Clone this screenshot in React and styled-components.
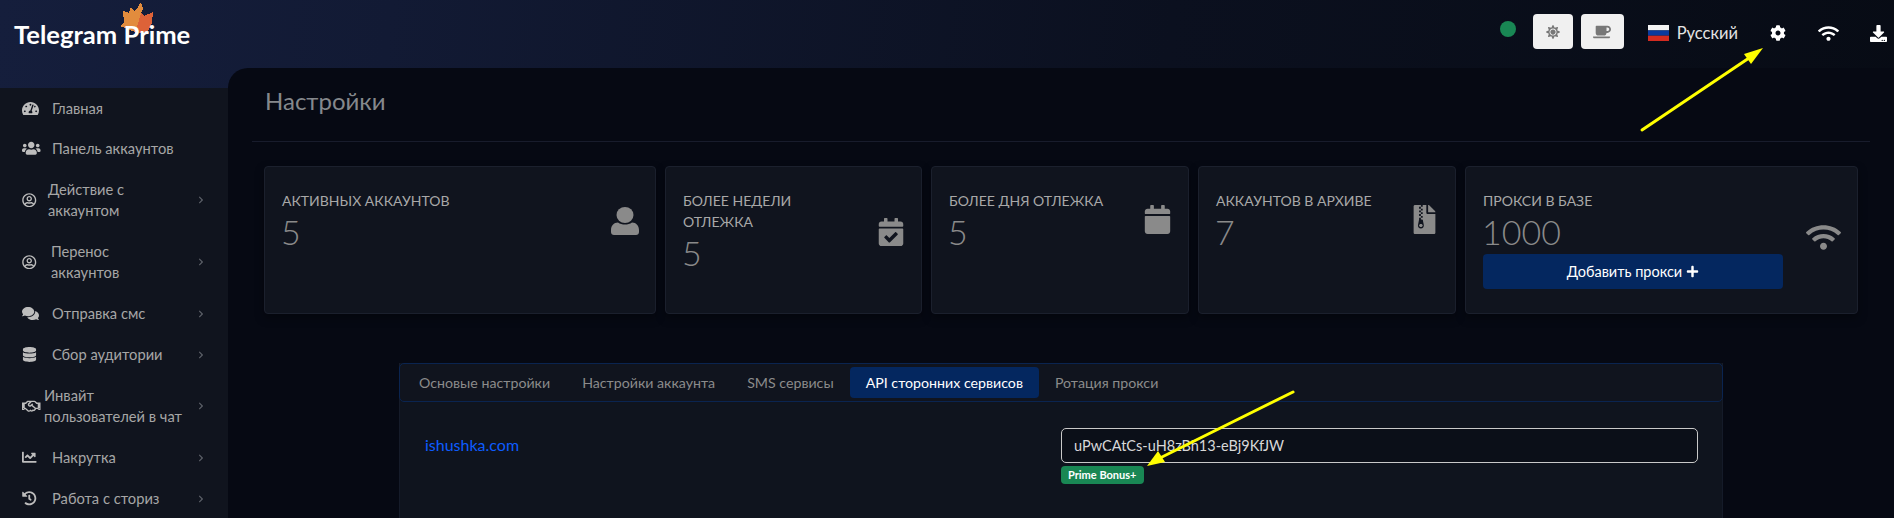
import React from "react";
import styled, { createGlobalStyle } from "styled-components";
import {
  FaTachometerAlt, FaUsers, FaRegUserCircle, FaComments, FaDatabase, FaRegHandshake,
  FaChartLine, FaHistory, FaChevronRight, FaCalendarCheck, FaCalendar,
  FaFileArchive, FaWifi, FaPlus, FaSun, FaCoffee, FaCog, FaDownload,
} from "react-icons/fa";

const Global = createGlobalStyle`
  html, body { margin: 0; padding: 0; background: #060913; }
  body { font-family: "Lato", "Noto Sans", "Open Sans", sans-serif; overflow: hidden; }
  * { box-sizing: border-box; }
`;

const Shell = styled.div`
  position: relative;
  width: 1894px;
  height: 518px;
  overflow: hidden;
  background: linear-gradient(97deg, #151e3c 0%, #121a34 20%, #0b101f 60%, #070b14 100%);
`;

const Header = styled.header`
  height: 68px;
  display: flex;
  align-items: flex-start;
`;

const Brand = styled.div`
  position: relative;
  width: 228px;
  padding: 21px 0 0 14px;
  font-size: 25.6px;
  line-height: 26px;
  font-weight: 700;
  color: #fff;
`;

const BrandText = styled.span`
  position: relative;
`;

const Leaf = styled.svg`
  position: absolute;
  left: 120px;
  top: 1px;
  width: 34px;
  height: 32px;
`;

const TopBar = styled.div`
  flex: 1;
  display: flex;
  align-items: flex-start;
  justify-content: flex-end;
  padding-top: 14px;
  margin-right: -9px;
`;

const StatusDot = styled.span`
  width: 16px;
  height: 16px;
  margin: 7px 17px 0 0;
  border-radius: 50%;
  background: #198754;
`;

const ToolButton = styled.button`
  width: ${(p) => p.$w}px;
  height: 35px;
  margin-right: 8px;
  display: flex;
  align-items: center;
  justify-content: center;
  border: 0;
  padding: 0;
  border-radius: 4px;
  background: #f0f0f0;
  color: #777;
  font-size: ${(p) => p.$size}px;
`;

const Language = styled.div`
  display: flex;
  align-items: center;
  height: 38px;
  margin: 0 15px 0 16px;
  gap: 8px;
  font-size: 16.5px;
  color: #e4e4e4;
`;

const TopIcon = styled.span`
  width: 50px;
  height: 38px;
  display: flex;
  align-items: center;
  justify-content: center;
  color: #fff;
  font-size: ${(p) => p.$size}px;
`;

const Body = styled.div`
  display: flex;
  height: 450px;
`;

const Sidebar = styled.nav`
  width: 228px;
  margin-top: 20px;
  background: #10141e;
`;

const NavItem = styled.div`
  display: flex;
  align-items: center;
  height: ${(p) => (p.$double ? 62 : 41)}px;
  padding: 0 23px 0 22px;
  color: #a6a6a6;
  font-size: 14.7px;
  line-height: 21px;
  &:first-child { height: 40px; }
`;

const NavIcon = styled.span`
  display: flex;
  flex: none;
  width: ${(p) => p.$w}px;
  font-size: ${(p) => p.$size}px;
  color: #bdbdbd;
`;

const NavCaret = styled.span`
  display: flex;
  margin-left: auto;
  font-size: 8px;
  color: #5c6068;
`;

const Main = styled.main`
  flex: 1;
  padding: 0 24px;
  border-top-left-radius: 20px;
  background: #060913;
`;

const TitleRow = styled.div`
  height: 74px;
  padding: 17px 0 0 13px;
  border-bottom: 1px solid #181c2c;
`;

const Title = styled.h1`
  margin: 0;
  font-size: 24px;
  line-height: 32px;
  font-weight: 400;
  color: #85888c;
`;

const Stats = styled.section`
  display: grid;
  grid-template-columns: 392px 257px 258px 258px 393px;
  gap: 9px;
  margin: 24px 0 0 12px;
`;

const StatCard = styled.article`
  height: 148px;
  display: flex;
  align-items: flex-start;
  padding: 23px 16px 0 17px;
  border: 1px solid #1b202d;
  border-radius: 4px;
  background: #10141e;
  box-shadow: 0 4px 10px rgba(0, 0, 0, 0.35);
`;

const StatText = styled.div`
  flex: 1;
  min-width: 0;
`;

const StatLabel = styled.div`
  font-size: 14px;
  line-height: 21px;
  color: #a8a8a8;
  text-transform: uppercase;
`;

const StatValue = styled.div`
  margin-left: -1px;
  font-size: 34px;
  line-height: 41px;
  font-weight: 300;
  color: #8a8a8a;
`;

const StatIcon = styled.span`
  display: flex;
  margin-top: ${(p) => p.$top}px;
  font-size: ${(p) => p.$size}px;
  color: #8a8a8a;
`;

const AddProxy = styled.button`
  width: 300px;
  height: 35px;
  margin-top: 2px;
  display: flex;
  align-items: center;
  justify-content: center;
  gap: 4px;
  border: 0;
  border-radius: 4px;
  background: #04275f;
  color: #fff;
  font-family: inherit;
  font-size: 14.5px;
`;

const Panel = styled.section`
  width: 1324px;
  height: 170px;
  margin: 49px 0 0 147px;
  border-left: 1px solid #151b29;
  border-right: 1px solid #151b29;
  background: #0f141e;
`;

const TabBar = styled.div`
  height: 39px;
  margin: 0 -1px;
  display: flex;
  align-items: center;
  padding: 0 3px;
  border: 1px solid #0a2450;
  border-radius: 5px;
  background: #10141e;
`;

const Tab = styled.div`
  height: 31px;
  padding: 0 16px;
  display: flex;
  align-items: center;
  border-radius: 4px;
  font-size: 14.2px;
  color: ${(p) => (p.$active ? "#fff" : "#8b8b8b")};
  background: ${(p) => (p.$active ? "#04275f" : "transparent")};
`;

const ServiceRow = styled.div`
  display: grid;
  grid-template-columns: 661px 637px;
  padding-top: 26px;
`;

const ServiceLink = styled.a`
  padding: 6px 0 0 25px;
  font-size: 16px;
  line-height: 21px;
  color: #0d5cff;
`;

const KeyInput = styled.input`
  display: block;
  width: 100%;
  height: 35px;
  padding: 0 12px;
  border: 1px solid #c9c9c9;
  border-radius: 5px;
  outline: 0;
  background: #0b0f18;
  color: #d8d8d8;
  font-family: inherit;
  font-size: 14.5px;
`;

const Badge = styled.span`
  display: inline-block;
  height: 18px;
  margin-top: 3px;
  padding: 0 7px;
  border-radius: 4px;
  background: #198754;
  color: #fff;
  font-size: 11px;
  line-height: 18px;
  font-weight: 700;
`;

const Arrows = styled.svg`
  position: absolute;
  inset: 0;
  width: 1894px;
  height: 518px;
  pointer-events: none;
`;

// Profile glyph: round head above a pill-shaped body.
const ProfileIcon = () => (
  <svg width="28" height="28" viewBox="0 0 28 28" fill="currentColor">
    <ellipse cx="14" cy="8" rx="8.5" ry="8" />
    <path d="M7 15.5c2 1.4 4.4 2 7 2s5-.6 7-2c4.2 0 7 3.4 7 7.5v2c0 1.7-1.3 3-3 3H3c-1.7 0-3-1.3-3-3v-2c0-4.1 2.8-7.5 7-7.5z" />
  </svg>
);

const navItems = [
  { icon: FaTachometerAlt, size: 17, lines: ["Главная"], iconW: 30 },
  { icon: FaUsers, size: 18.5, lines: ["Панель аккаунтов"], iconW: 30 },
  { icon: FaRegUserCircle, size: 14.5, lines: ["Действие с", "аккаунтом"], iconW: 26, caret: true },
  { icon: FaRegUserCircle, size: 14.5, lines: ["Перенос", "аккаунтов"], iconW: 29, caret: true },
  { icon: FaComments, size: 17, lines: ["Отправка смс"], iconW: 30, caret: true },
  { icon: FaDatabase, size: 15, lines: ["Сбор аудитории"], iconW: 30, caret: true },
  { icon: FaRegHandshake, size: 18.5, lines: ["Инвайт", "пользователей в чат"], iconW: 22, caret: true },
  { icon: FaChartLine, size: 14.5, lines: ["Накрутка"], iconW: 30, caret: true },
  { icon: FaHistory, size: 14.5, lines: ["Работа с сториз"], iconW: 30, caret: true },
];

const tabs = ["Основые настройки", "Настройки аккаунта", "SMS сервисы", "API сторонних сервисов", "Ротация прокси"];

export default function App() {
  return (
    <Shell>
      <Global />
      <Header>
        <Brand>
          <Leaf viewBox="0 0 34 32" shapeRendering="crispEdges">
            <polygon fill="#dd6238" points="21,11 24,15 33,11 32,21 31,25 27,31 15,32 15,22" />
            <polygon fill="#e28c3d" points="21,1 23,8 21,12 17,26 15,31 10,29 0,25 4,21 3,10 9,12 11,6 14,10 18,6" />
          </Leaf>
          <BrandText>Telegram Prime</BrandText>
        </Brand>
        <TopBar>
          <StatusDot />
          <ToolButton $w={40} $size={14}><FaSun /></ToolButton>
          <ToolButton $w={43} $size={18}><FaCoffee /></ToolButton>
          <Language>
            <svg width="21" height="16" viewBox="0 0 21 16">
              <rect width="21" height="5.4" fill="#f4f4f4" />
              <rect y="5.4" width="21" height="5.3" fill="#0a3a9e" />
              <rect y="10.7" width="21" height="5.3" fill="#d32b20" />
            </svg>
            Русский
          </Language>
          <TopIcon $size={16}><FaCog /></TopIcon>
          <TopIcon $size={21}><FaWifi /></TopIcon>
          <TopIcon $size={17}><FaDownload /></TopIcon>
        </TopBar>
      </Header>
      <Body>
        <Sidebar>
          {navItems.map((item) => (
            <NavItem key={item.lines[0]} $double={item.lines.length > 1}>
              <NavIcon $w={item.iconW} $size={item.size}><item.icon /></NavIcon>
              <span>
                {item.lines[0]}
                {item.lines[1] && <><br />{item.lines[1]}</>}
              </span>
              {item.caret && <NavCaret><FaChevronRight /></NavCaret>}
            </NavItem>
          ))}
        </Sidebar>
        <Main>
          <TitleRow><Title>Настройки</Title></TitleRow>
          <Stats>
            <StatCard>
              <StatText>
                <StatLabel>Активных аккаунтов</StatLabel>
                <StatValue>5</StatValue>
              </StatText>
              <StatIcon $top={17}><ProfileIcon /></StatIcon>
            </StatCard>
            <StatCard>
              <StatText>
                <StatLabel>Более недели<br />отлежка</StatLabel>
                <StatValue>5</StatValue>
              </StatText>
              <StatIcon $size={28} $top={28}><FaCalendarCheck /></StatIcon>
            </StatCard>
            <StatCard>
              <StatText>
                <StatLabel>Более дня отлежка</StatLabel>
                <StatValue>5</StatValue>
              </StatText>
              <StatIcon $size={29} $top={15}><FaCalendar /></StatIcon>
            </StatCard>
            <StatCard>
              <StatText>
                <StatLabel>Аккаунтов в архиве</StatLabel>
                <StatValue>7</StatValue>
              </StatText>
              <StatIcon $size={29} $top={15}><FaFileArchive /></StatIcon>
            </StatCard>
            <StatCard>
              <StatText>
                <StatLabel>Прокси в базе</StatLabel>
                <StatValue>1000</StatValue>
                <AddProxy>Добавить прокси <FaPlus size={13} /></AddProxy>
              </StatText>
              <StatIcon $size={35} $top={30}><FaWifi /></StatIcon>
            </StatCard>
          </Stats>
          <Panel>
            <TabBar>
              {tabs.map((t) => (
                <Tab key={t} $active={t.startsWith("API")}>{t}</Tab>
              ))}
            </TabBar>
            <ServiceRow>
              <ServiceLink>ishushka.com</ServiceLink>
              <div>
                <KeyInput readOnly value="uPwCAtCs-uH8zBh13-eBj9KfJW" />
                <Badge>Prime Bonus+</Badge>
              </div>
            </ServiceRow>
          </Panel>
        </Main>
      </Body>
      <Arrows viewBox="0 0 1894 518">
        <g stroke="#ffff00" strokeWidth="3" strokeLinecap="round" fill="#ffff00">
          <line x1="1642" y1="130" x2="1752" y2="56" />
          <polygon stroke="none" points="1763,48 1751,64 1744,54" />
          <line x1="1293" y1="392" x2="1160" y2="458" />
          <polygon stroke="none" points="1147,466 1158,451 1165,462" />
        </g>
      </Arrows>
    </Shell>
  );
}
